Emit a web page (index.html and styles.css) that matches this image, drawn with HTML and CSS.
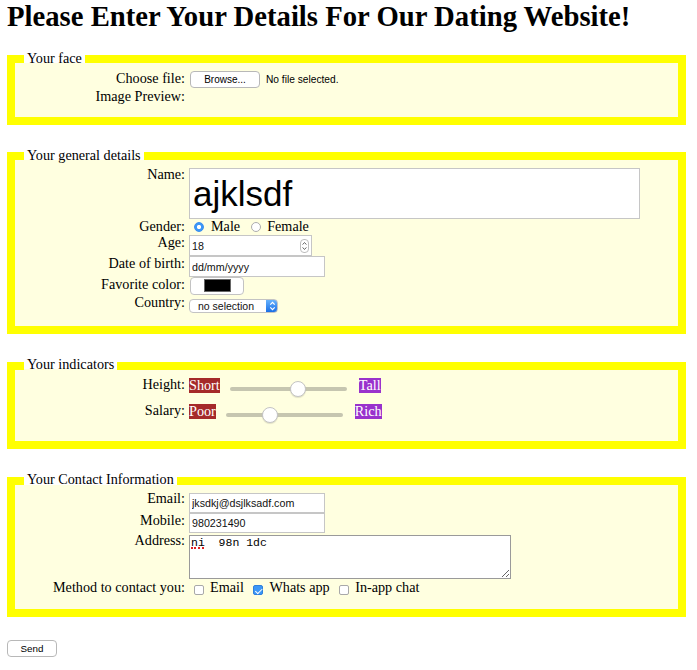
FILE: index.html
```html
<!DOCTYPE html>
<html lang="en">
<head>
<meta charset="utf-8">
<title>Dating Website Details</title>
<link rel="stylesheet" href="styles.css">
</head>
<body>
<h1 class="title">Please Enter Your Details For Our Dating Website!</h1>
<form class="form">
  <fieldset class="group group-face">
    <legend class="legend">Your face</legend>
    <div class="row row-file">
      <label class="lbl">Choose file:</label>
      <div class="ctl">
        <button type="button" class="btn btn-browse">Browse...</button>
        <span class="nofile">No file selected.</span>
      </div>
    </div>
    <div class="row row-preview">
      <label class="lbl">Image Preview:</label>
      <div class="ctl"></div>
    </div>
  </fieldset>

  <fieldset class="group group-general">
    <legend class="legend">Your general details</legend>
    <div class="row row-name">
      <label class="lbl" for="name">Name:</label>
      <div class="ctl"><input id="name" class="txt txt-name" type="text" value="ajklsdf" spellcheck="false"></div>
    </div>
    <div class="row row-gender">
      <label class="lbl">Gender:</label>
      <div class="ctl choices">
        <input class="radio radio-1" type="radio" name="gender" checked>
        <span class="opt opt-first">Male</span>
        <input class="radio radio-2" type="radio" name="gender">
        <span class="opt">Female</span>
      </div>
    </div>
    <div class="row row-age">
      <label class="lbl" for="age">Age:</label>
      <div class="ctl">
        <span class="spin-wrap">
          <input id="age" class="txt txt-age" type="text" value="18">
          <svg class="spin" viewBox="0 0 9 14" width="9" height="14" aria-hidden="true">
            <rect x="0.5" y="0.5" width="8" height="13" rx="3.5" fill="#fff" stroke="#bdbdbd"/>
            <path d="M2.6 5.6 L4.5 3.5 L6.4 5.6" fill="none" stroke="#666" stroke-width="1"/>
            <path d="M2.6 8.4 L4.5 10.5 L6.4 8.4" fill="none" stroke="#666" stroke-width="1"/>
          </svg>
        </span>
      </div>
    </div>
    <div class="row row-dob">
      <label class="lbl" for="dob">Date of birth:</label>
      <div class="ctl"><input id="dob" class="txt txt-dob" type="text" value="dd/mm/yyyy"></div>
    </div>
    <div class="row row-color">
      <label class="lbl" for="fav">Favorite color:</label>
      <div class="ctl"><input id="fav" class="color" type="color" value="#000000"></div>
    </div>
    <div class="row row-country">
      <label class="lbl" for="country">Country:</label>
      <div class="ctl">
        <span class="sel-wrap">
          <select id="country" class="sel">
            <option>no selection</option>
          </select>
          <svg class="sel-arrows" viewBox="0 0 7 10" width="7" height="10" aria-hidden="true">
            <path d="M1.3 3.6 L3.5 1.4 L5.7 3.6" fill="none" stroke="#fff" stroke-width="1.2"/>
            <path d="M1.3 6.4 L3.5 8.6 L5.7 6.4" fill="none" stroke="#fff" stroke-width="1.2"/>
          </svg>
        </span>
      </div>
    </div>
  </fieldset>

  <fieldset class="group group-ind">
    <legend class="legend">Your indicators</legend>
    <div class="row row-range">
      <label class="lbl">Height:</label>
      <div class="ctl">
        <span class="tag tag-low">Short</span>
        <input class="range" type="range" min="0" max="100" value="60">
        <span class="tag tag-high">Tall</span>
      </div>
    </div>
    <div class="row row-range">
      <label class="lbl">Salary:</label>
      <div class="ctl">
        <span class="tag tag-low">Poor</span>
        <input class="range" type="range" min="0" max="100" value="36">
        <span class="tag tag-high">Rich</span>
      </div>
    </div>
  </fieldset>

  <fieldset class="group group-contact">
    <legend class="legend">Your Contact Information</legend>
    <div class="row row-email">
      <label class="lbl" for="email">Email:</label>
      <div class="ctl"><input id="email" class="txt txt-email" type="text" value="jksdkj@dsjlksadf.com" spellcheck="false"></div>
    </div>
    <div class="row row-mobile">
      <label class="lbl" for="mobile">Mobile:</label>
      <div class="ctl"><input id="mobile" class="txt txt-mobile" type="text" value="980231490"></div>
    </div>
    <div class="row row-addr">
      <label class="lbl" for="addr">Address:</label>
      <div class="ctl">
        <span class="addr-wrap">
          <textarea id="addr" class="addr" spellcheck="false">ni  98n 1dc</textarea>
          <span class="spell"></span>
        </span>
      </div>
    </div>
    <div class="row row-method">
      <label class="lbl">Method to contact you:</label>
      <div class="ctl choices">
        <input class="cb cb-first" type="checkbox">
        <span class="opt">Email</span>
        <input class="cb" type="checkbox" checked>
        <span class="opt">Whats app</span>
        <input class="cb" type="checkbox">
        <span class="opt">In-app chat</span>
      </div>
    </div>
  </fieldset>

  <button type="button" class="btn btn-send">Send</button>
</form>
</body>
</html>
```

FILE: styles.css
```css
* { box-sizing: border-box; }

html { background: #fff; }

body {
  margin: 0 11px 0 7px;
  font-family: "Liberation Serif", "Times New Roman", serif;
  font-size: 14.2px;
  color: #000;
}

input, select, textarea, button {
  font-family: "Liberation Sans", Arial, sans-serif;
}

.title {
  margin: 0 0 17.5px;
  font-size: 28.7px;
  line-height: 32px;
  font-weight: bold;
  white-space: nowrap;
}

.form { margin: 0; }

.group {
  margin: 0;
  padding: 0 0 12px;
  border: 8px solid #ffff00;
  background: #ffffe0;
  min-width: 0;
}

.group + .group { margin-top: 22px; }

.group-face { padding-top: 2px; padding-bottom: 12px; }
.group-general { padding-top: 1px; padding-bottom: 9px; }
.group-ind { padding-top: 0; padding-bottom: 14px; }
.group-contact { padding-top: 1px; padding-bottom: 11px; }

.legend {
  margin-left: 9px;
  padding: 0 3px 3px;
  font-size: 14.2px;
  line-height: 16px;
  background: linear-gradient(#fff 0, #fff calc(50% + 4px), transparent calc(50% + 4px));
}

.row {
  display: grid;
  grid-template-columns: 170px 1fr;
  column-gap: 4px;
  align-items: start;
}

.lbl {
  text-align: right;
  line-height: 14px;
  white-space: nowrap;
}

.ctl {
  display: flex;
  align-items: flex-start;
  min-width: 0;
}

/* buttons */
.btn {
  height: 17px;
  padding: 0;
  margin: 0;
  font-size: 10px;
  line-height: 15px;
  color: #000;
  background: #fff;
  border: 1px solid #b8b8b8;
  border-radius: 4px;
}

.btn-browse { width: 70px; margin-left: 1px; }

.nofile {
  margin-left: 6px;
  font-family: "Liberation Sans", Arial, sans-serif;
  font-size: 10.2px;
  line-height: 17px;
}

.row-file .ctl { height: 18px; }
.row-preview .ctl { height: 16px; }

/* text inputs */
.txt {
  margin: 0;
  padding: 0 2px;
  border: 1px solid #c6c6c6;
  border-radius: 0;
  background: #fff;
  font-size: 10.7px;
  color: #111;
  outline: none;
}

.txt-name {
  width: 451px;
  height: 51px;
  margin-top: 1.5px;
  padding: 0 3px;
  font-size: 35px;
  color: #000;
}

.txt-age { width: 123px; height: 21px; }
.txt-dob { width: 136px; height: 21px; }
.txt-email { width: 136px; height: 20px; margin-top: 2px; }
.txt-mobile { width: 136px; height: 20px; }

.spin-wrap { position: relative; display: inline-block; height: 21px; }
.spin { position: absolute; right: 3.5px; top: 3.5px; }

/* radios & checkboxes */
.choices { line-height: 14px; height: 16px; }
.row-method .choices { height: 18px; }

.radio {
  appearance: none;
  -webkit-appearance: none;
  flex: none;
  width: 10px;
  height: 10px;
  margin: 3px 0 0 11px;
  border: 1px solid #adadad;
  border-radius: 50%;
  background: #fff;
}

.radio-1 { margin-left: 5px; }

.radio:checked {
  border-color: #3a8ef0;
  background: radial-gradient(circle, #fff 0, #fff 1.8px, #3c97f7 2.4px);
}

.opt { margin-left: 6px; white-space: nowrap; }
.opt-first { margin-left: 7px; }

.cb {
  appearance: none;
  -webkit-appearance: none;
  position: relative;
  flex: none;
  width: 10px;
  height: 10px;
  margin: 5px 0 0 9.5px;
  border: 1px solid #a9a9a9;
  border-radius: 2px;
  background: #fff;
}

.cb-first { margin-left: 5px; }

.cb:checked {
  background: #3c97f7;
  border-color: #2f80dc;
}

.cb:checked::after {
  content: "";
  position: absolute;
  left: 2.6px;
  top: 0.6px;
  width: 3px;
  height: 5.5px;
  border: solid #fff;
  border-width: 0 1.5px 1.5px 0;
  transform: rotate(45deg);
}

/* color */
.color {
  -webkit-appearance: none;
  appearance: none;
  width: 54px;
  height: 18px;
  margin: 0 0 0 1px;
  padding: 0;
  border: 1px solid #c3c3c3;
  border-radius: 4px;
  background: #fff;
}

.color::-webkit-color-swatch-wrapper { padding: 1px 12px 2px 13px; }
.color::-webkit-color-swatch { border: 1px solid #666; border-radius: 0; }

/* select */
.sel-wrap {
  position: relative;
  display: inline-block;
  height: 14px;
  margin: 4px 0;
}

.sel {
  -webkit-appearance: none;
  appearance: none;
  display: block;
  width: 89px;
  height: 14px;
  margin: 0;
  padding: 0 0 0 8px;
  font-size: 10.5px;
  line-height: 12px;
  color: #111;
  border: 1px solid #c3c3c3;
  border-radius: 4px;
  background: linear-gradient(#66b2fd, #1a6fe6) right top / 11px 100% no-repeat, #fff;
  outline: none;
}

.sel-arrows {
  position: absolute;
  right: 2px;
  top: 2px;
  pointer-events: none;
}

/* ranges */
.row-range { height: 26px; }
.row-range .lbl { padding-top: 2px; }

.tag {
  margin-top: 3px;
  line-height: 15px;
  color: #fff;
  white-space: nowrap;
}

.tag-low { background: #a52a2a; }
.tag-high { background: #9932cc; }

.range {
  -webkit-appearance: none;
  appearance: none;
  flex: none;
  width: 117px;
  height: 16px;
  margin: 6px 12px 0 10px;
  padding: 0;
  background: transparent;
}

.range::-webkit-slider-runnable-track {
  height: 4px;
  background: #c6c6b0;
  border-radius: 2px;
}

.range::-webkit-slider-thumb {
  -webkit-appearance: none;
  appearance: none;
  width: 16px;
  height: 16px;
  margin-top: -6px;
  border: 1px solid #c4c4c4;
  border-radius: 50%;
  background: #fff;
  box-shadow: 0 1px 1px rgba(0, 0, 0, 0.12);
}

/* address */
.addr-wrap {
  position: relative;
  display: inline-block;
  margin: 2px 0 1px;
  height: 44px;
}

.addr {
  display: block;
  width: 322px;
  height: 44px;
  margin: 0;
  padding: 0 1px;
  border: 1px solid #9a9a9a;
  border-radius: 0;
  background: #fff;
  font-family: "Liberation Mono", "Courier New", monospace;
  font-size: 11.5px;
  line-height: 13px;
  color: #000;
  resize: both;
  outline: none;
}

.spell {
  position: absolute;
  left: 2px;
  top: 12px;
  width: 13px;
  border-bottom: 2px dotted #e0201f;
}

/* send */
.btn-send {
  display: block;
  width: 50px;
  margin-top: 23px;
  font-size: 9.8px;
}
```
